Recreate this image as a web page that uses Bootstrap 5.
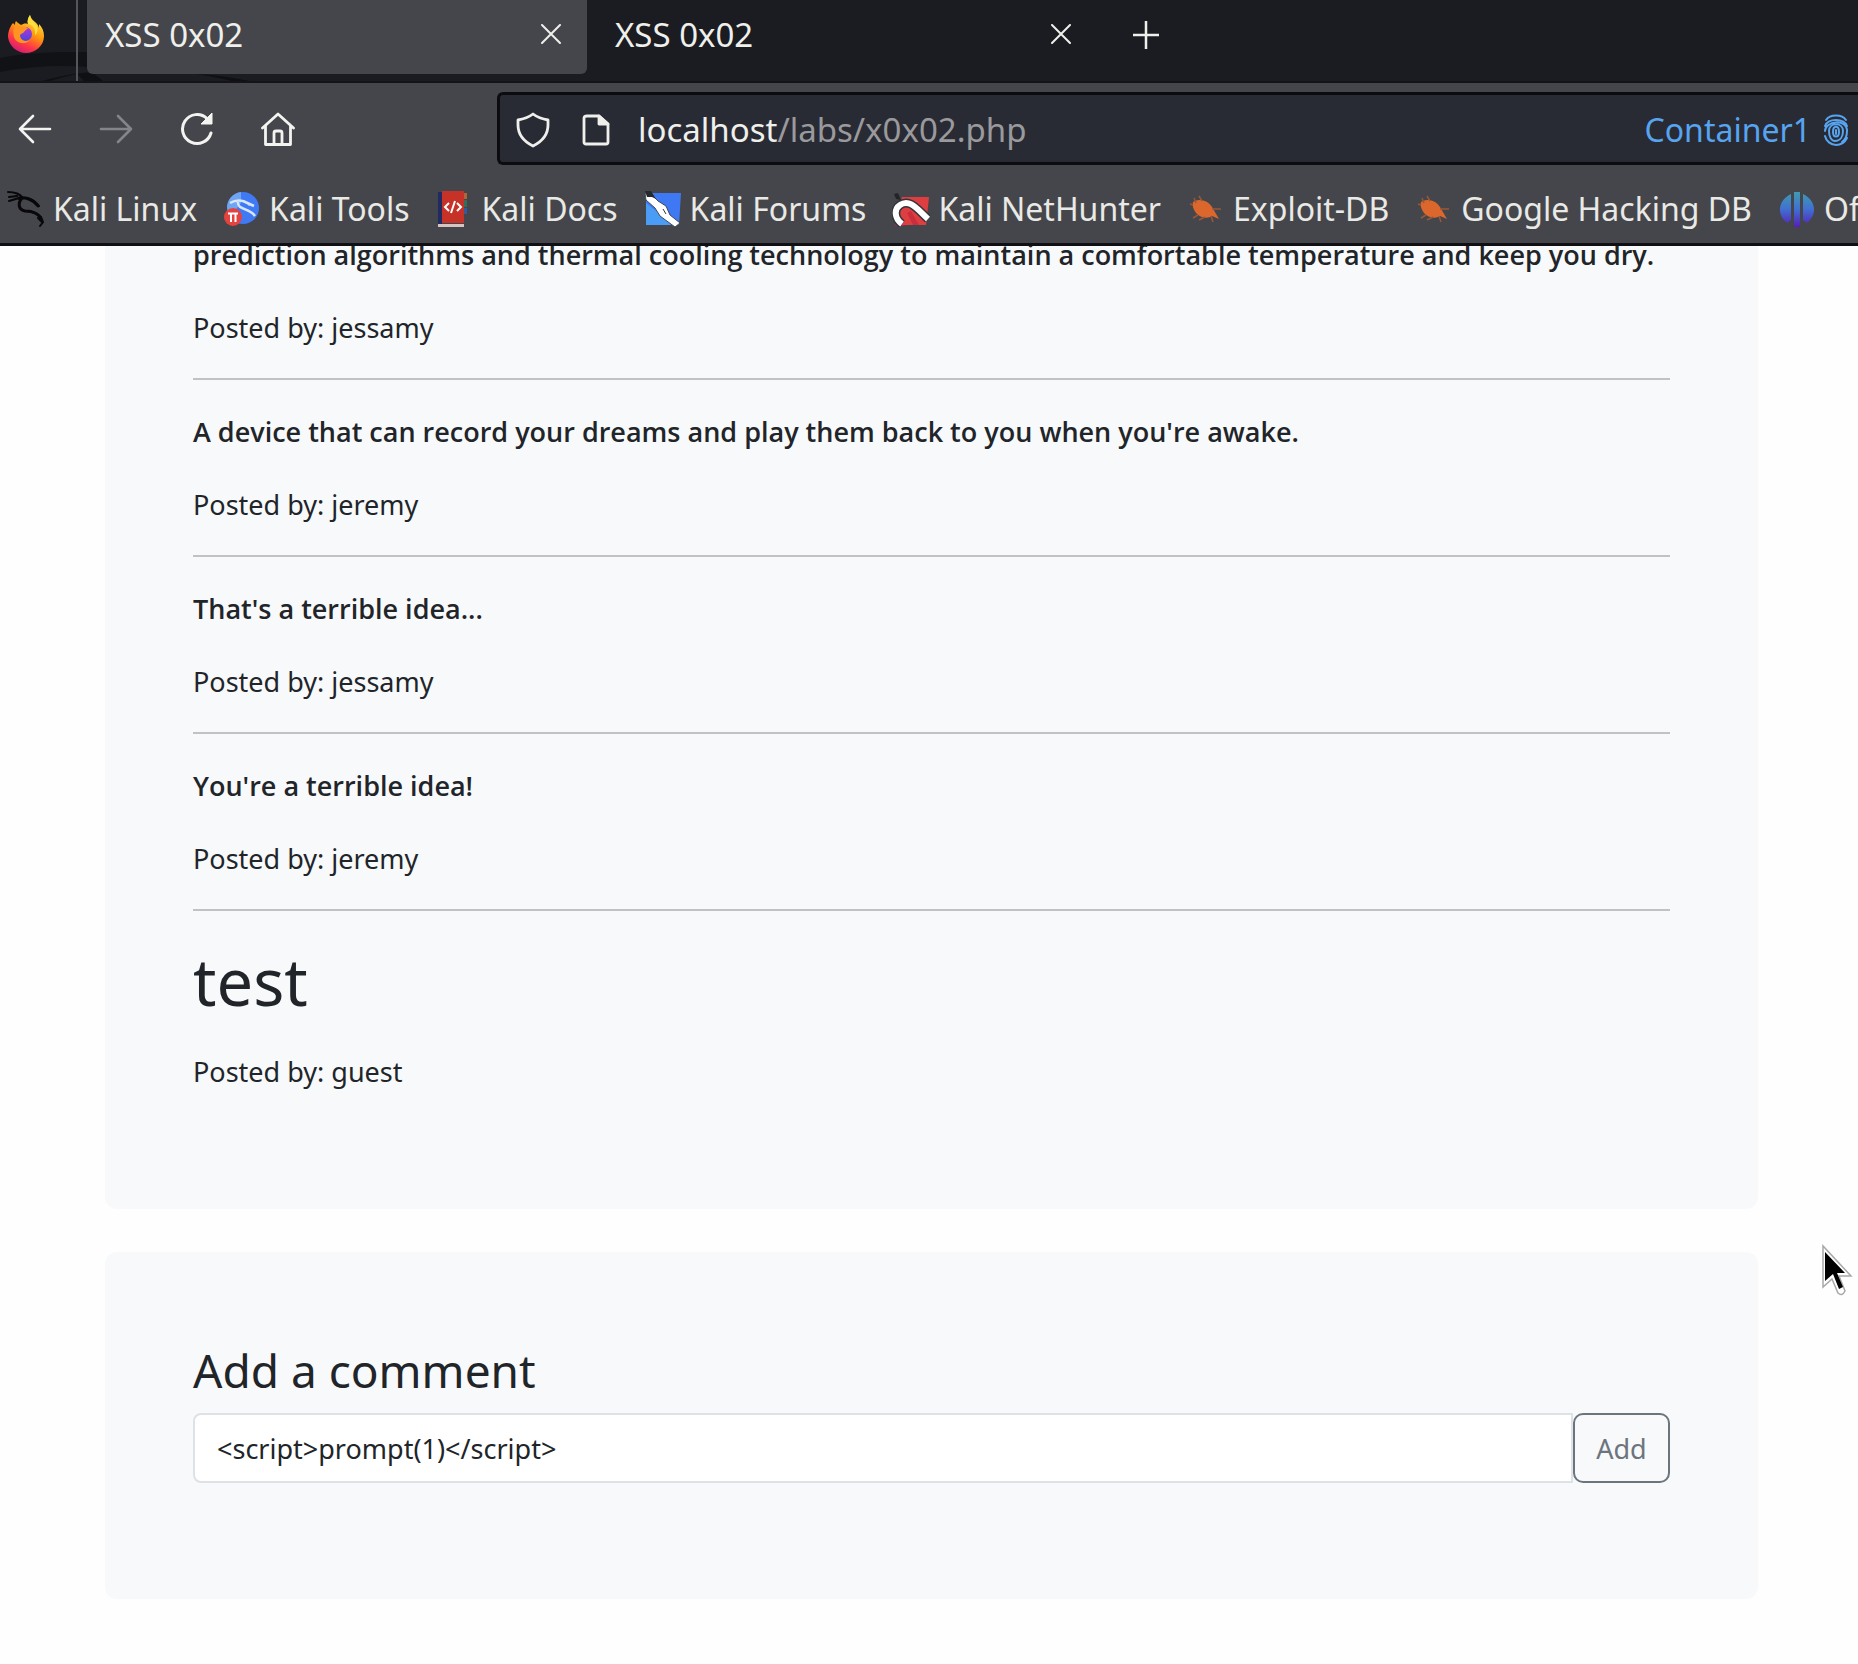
<!DOCTYPE html>
<html lang="en">
<head>
<meta charset="utf-8">
<meta name="viewport" content="width=device-width, initial-scale=1">
<title>XSS 0x02</title>
<link href="https://cdn.jsdelivr.net/npm/bootstrap@5.3.0/dist/css/bootstrap.min.css" rel="stylesheet">
<style>
  body { font-family: "Noto Sans", "Open Sans", sans-serif; font-size: 27px; line-height: 44px; color: #212529; background: #fefefe; overflow-x: hidden; }
  svg { display: block; flex: none; }
  button { line-height: 1; }

  /* Browser chrome */
  .chrome { background: #45464b; border-bottom: 3px solid #101014; color: #efefec; }
  .tab-strip { height: 83px; background: #1b1c21; border-bottom: 2px solid #131318; position: relative; padding-bottom: 7px; }
  .swirl { position: absolute; left: 0; bottom: 0; }
  .pinned { width: 78px; padding: 15px 0 0 8px; border-right: 2px solid #55565b; margin-bottom: -7px; margin-right: 9px; position: relative; }
  .page-tab { width: 500px; padding: 0 26px 6px 18px; font-size: 33px; border-radius: 0 0 6px 6px; position: relative; }
  .page-tab.current { background: #45464b; }
  .page-tab + .page-tab { width: 498px; padding-left: 28px; padding-right: 14px; }
  .plain { background: none; border: 0; padding: 0; color: inherit; }
  .nav-bar { height: 84px; padding: 9px 0 2px 0; }
  .nav-icons { width: 497px; gap: 47px; padding-left: 18px; }
  .url-box { background: #292b34; border: 3px solid #0c0c10; border-right: 0; border-radius: 6px 0 0 6px; font-size: 33px; padding: 2px 9px 0 16px; }
  .url-page { margin: 0 28px; }
  .url-path { color: #9a9a9d; }
  .container-name { color: #57a4f0; font-size: 32px; }
  .marks { height: 76px; padding: 7px 0 0 7px; gap: 26px; font-size: 32px; white-space: nowrap; overflow: hidden; }
  .marks a { color: #e9e9e6; text-decoration: none; gap: 8px; }

  /* Lab page */
  .lab { padding: 0 100px 65px 105px; }
  .panel { background: #f8f9fb; border-radius: 12px; padding: 88px; margin-bottom: 43px; }
  .panel-first { border-radius: 0 0 12px 12px; padding-top: 0; padding-bottom: 87px; margin-top: -13px; }
  .comment-text { margin: 0 0 29px; font-weight: 600; font-family: "Open Sans", "Noto Sans", sans-serif; white-space: nowrap; }
  .comment-h1 { font-size: 65px; line-height: 80px; margin: 0 0 29px; }
  .byline { margin: 0 0 28px; }
  .panel hr { margin: 0 0 30px; border-top: 2px solid #c1c2c4; opacity: 1; }
  .form-title { font-size: 46px; line-height: 60px; margin: 0 0 13px; font-weight: 400; }
  .comment-form { margin-bottom: 28px; height: 70px; }
  .comment-form .form-control { font-size: 27px; border: 2px solid #dee2e6; border-radius: 8px 0 0 8px; padding: 2px 22px 0; background: #fff; }
  .comment-form .btn { font-size: 27px; width: 97px; border-width: 2px; border-radius: 10px; padding: 2px 0 0; }
  .pointer { position: fixed; left: 1819px; top: 1243px; }
</style>
<script src="https://cdn.jsdelivr.net/npm/bootstrap@5.3.0/dist/js/bootstrap.bundle.min.js"></script>
</head>
<body>

<header class="chrome sticky-top">
  <div class="tab-strip d-flex">
    <svg class="swirl" width="260" height="40" viewBox="0 0 260 40" aria-hidden="true">
      <path d="M0 17C30 11 58 11 88 11V26C60 24 30 25 0 31Z" fill="#111216"/>
      <path d="M42 40C60 35 76 32 92 31L103 40H84L77 33C66 35 57 38 50 40ZM196 33C218 34 234 37 250 40H232C220 37 208 35 196 33Z" fill="#0f1013"/>
    </svg>
    <div class="pinned">
      <button class="plain" aria-label="Firefox">
        <svg width="36" height="38" viewBox="0 0 36 38">
          <defs>
            <linearGradient id="fx" x1=".8" y1="0" x2=".3" y2="1"><stop offset="0" stop-color="#fff44f"/><stop offset=".45" stop-color="#ff980e"/><stop offset=".75" stop-color="#ff3647"/><stop offset="1" stop-color="#d01c78"/></linearGradient>
            <linearGradient id="fg" x1="0" y1="0" x2="0" y2="1"><stop offset="0" stop-color="#b833e1"/><stop offset="1" stop-color="#4a46d8"/></linearGradient>
          </defs>
          <path d="M22 0c-2 3-3 6-2 9-3-1-5 0-7 1-2-1-4-3-5-4-1 1-1 3-1 4L5 8C1 13 0 18 0 22c1 9 9 16 18 16s18-7 18-17c0-5-2-9-5-12 0 2 0 3 0 4C30 7 23 6 22 0Z" fill="url(#fx)"/>
          <circle cx="17" cy="19" r="7" fill="url(#fg)"/>
          <path d="M7 10c3 0 5 1 6 2 3-1 6 0 7 2-2 0-3 2-4 3-1 2-4 1-4 4 1 5 6 6 10 4-4 5-14 4-16-3-1-4-1-8 1-12Z" fill="#ff9422"/>
          <path d="M20 9c5 1 8 5 7 11 3-2 3-6 2-9-2-3-6-5-7-11-2 3-3 6-2 9Z" fill="#ffdf3f"/>
        </svg>
      </button>
    </div>
    <div class="page-tab current d-flex align-items-center justify-content-between">
      <button class="plain">XSS 0x02</button>
      <button class="plain" aria-label="Close tab"><svg width="20" height="20" viewBox="0 0 20 20" stroke="#efefec" stroke-width="2" stroke-linecap="round"><path d="M1 1 19 19M19 1 1 19"/></svg></button>
    </div>
    <div class="page-tab d-flex align-items-center justify-content-between">
      <button class="plain">XSS 0x02</button>
      <button class="plain" aria-label="Close tab"><svg width="20" height="20" viewBox="0 0 20 20" stroke="#efefec" stroke-width="2" stroke-linecap="round"><path d="M1 1 19 19M19 1 1 19"/></svg></button>
    </div>
    <button class="plain ms-5 pb-1" aria-label="New tab"><svg width="26" height="28" viewBox="0 0 26 28" stroke="#efefec" stroke-width="2.5"><path d="M13 0V28M0 14H26"/></svg></button>
  </div>

  <div class="nav-bar d-flex">
    <div class="nav-icons d-flex align-items-center">
      <button class="plain" aria-label="Back"><svg width="34" height="30" viewBox="0 0 34 30" fill="none" stroke="#f3f3f0" stroke-width="2.6" stroke-linecap="round" stroke-linejoin="round"><path d="M32 15H2M15 2 2 15 15 28"/></svg></button>
      <button class="plain" aria-label="Forward"><svg width="34" height="30" viewBox="0 0 34 30" fill="none" stroke="#84858a" stroke-width="2.6" stroke-linecap="round" stroke-linejoin="round"><path d="M2 15H32M19 2 32 15 19 28"/></svg></button>
      <button class="plain" aria-label="Reload"><svg width="34" height="34" viewBox="0 0 34 34" fill="none"><path d="M31 21A14.5 14.5 0 1 1 27 6.500" stroke="#f3f3f0" stroke-width="3" stroke-linecap="round"/><path d="M32 1V12H21Z" fill="#f3f3f0" stroke="#f3f3f0" stroke-linejoin="round"/></svg></button>
      <button class="plain" aria-label="Home"><svg width="34" height="34" viewBox="0 0 34 34" fill="none" stroke="#f3f3f0" stroke-width="2.8" stroke-linejoin="round" stroke-linecap="round"><path d="M1.500 16 17 2 32.500 16M4.500 14V32.500H29.500V14M13 32V21Q13 19 15 19H19Q21 19 21 21V32"/></svg></button>
    </div>
    <div class="url-box d-flex align-items-center flex-grow-1">
      <svg width="34" height="36" viewBox="0 0 34 36" fill="none" stroke="#efefec" stroke-width="2.800" stroke-linejoin="round"><path d="M17 2C13 5 8 7 2 8V13C2 22 7 29 17 34 27 29 32 22 32 13V8C26 7 21 5 17 2Z"/></svg>
      <svg class="url-page ms-4 ps-2" width="36" height="32" viewBox="0 0 28 32" preserveAspectRatio="xMidYMid meet" fill="none" stroke="#efefec" stroke-width="2.800" stroke-linejoin="round"><path d="M5 2H17L26 10V28Q26 30 24 30H4Q2 30 2 28V4Q2 2 5 2Z"/><path d="M17 2V10H26Z" fill="#efefec"/></svg>
      <div class="flex-grow-1" role="textbox" aria-label="Address" contenteditable="true" spellcheck="false">localhost<span class="url-path">/labs/x0x02.php</span></div>
      <span class="container-name">Container1</span>
      <svg class="ms-2 ps-1" width="30" height="32" viewBox="0 0 26 32" fill="none" stroke="#57a4f0" stroke-width="2" stroke-linecap="round"><path d="M3 6C7 0 19 0 23 6M2 12C5 4 21 4 24 12M2 17C2 7 24 4 24 17 24 22 22 26 19 28M2 22C3 27 8 31 13 31 18 31 22 28 24 24M6 17C6 8 20 8 20 17 20 23 17 27 12 27 8 27 6 22 6 17ZM10 18C10 11 16 11 16 18 16 24 10 24 10 18M13 16V20"/></svg>
    </div>
  </div>

  <nav class="marks d-flex align-items-center" aria-label="Bookmarks">
    <a href="#" class="d-flex align-items-center">
      <svg width="38" height="36" viewBox="0 0 38 36" fill="none" stroke="#08080a" stroke-linecap="round"><path d="M1 1C8 1 13 3 16 7L12 8M2 6 10 5M2 10 12 7" stroke-width="2"/><path d="M12 7C18 6 26 8 31 15M15 7C10 13 12 19 18 20 26 20 33 23 34 29" stroke-width="3"/><path d="M20 7 27 10 32 15M26 21 34 26 36 31 33 35M31 27 35 31" stroke-width="2"/></svg>Kali Linux</a>
    <a href="#" class="d-flex align-items-center">
      <svg width="38" height="36" viewBox="0 0 38 36"><circle cx="20" cy="17" r="16" fill="#3f79f4"/><path d="M4 17A16 16 0 0 1 18 1V12L7 26Z" fill="#70a5f1"/><path d="M7 12C16 7 22 10 27 14M15 11C14 19 27 17 32 25M20 10 31 15" fill="none" stroke="#d6e6fc" stroke-width="2.500"/><circle cx="10" cy="26" r="9" fill="#e2433e"/><path d="M5 22.500H15M8 23V31M12.500 23V31" stroke="#fff" stroke-width="2" fill="none"/></svg>Kali Tools</a>
    <a href="#" class="d-flex align-items-center">
      <svg width="38" height="36" viewBox="0 0 38 36"><path d="M2 1H6V33H2Z" fill="#202b61"/><path d="M6 0H28V32H6Z" fill="#c73228"/><path d="M28 2H31V8H28Z" fill="#b66436"/><path d="M28 9H31V16H28Z" fill="#30705a"/><path d="M28 17H31V23H28Z" fill="#315aa0"/><path d="M2 33H28V36H2Z" fill="#d6c4c0"/><path d="M13 12 9 16 13 20M21 12 25 16 21 20M19 10 15 22" stroke="#fff" stroke-width="2" fill="none"/></svg>Kali Docs</a>
    <a href="#" class="d-flex align-items-center">
      <svg width="38" height="36" viewBox="0 0 38 36"><path d="M2 2H37L35 34H2Z" fill="#3e79f3"/><path d="M2 12 30 34H2Z" fill="#4b9cf5"/><path d="M1 2 8 4 14 10 22 15 26 24 36 32 31 36 16 25 11 17 2 9Z" fill="#fff" stroke="#41495d"/><path d="M1 0H7L12 8 8 6 3 6Z" fill="#25282c"/><path d="m19 18 3 5" stroke="#333"/></svg>Kali Forums</a>
    <a href="#" class="d-flex align-items-center">
      <svg width="38" height="36" viewBox="0 0 38 36"><path d="M10 6H37L34 34H3V25Z" fill="#de3e40"/><path d="M3 24C5 34 12 35 19 35H3Z" fill="#a2264e"/><path d="M10 33C2 27 2 18 8 14 18 7 26 19 36 28" fill="none" stroke="#34343a" stroke-width="9"/><path d="M10 33C2 27 2 18 8 14 18 7 26 19 36 28" fill="none" stroke="#fff" stroke-width="6"/><path d="M2 3 6 2 9 9 4 8Z" fill="#222428"/><path d="M15 22 19 20 27 34H21Z" fill="#c92e3d"/></svg>Kali NetHunter</a>
    <a href="#" class="d-flex align-items-center">
      <svg width="38" height="36" viewBox="0 0 38 36"><path d="M6 11C11 7 21 9 25 16L32 28 25 25C21 28 13 27 9 22 6 18 5 14 6 11Z" fill="#dc672d"/><path d="M9 12 7 7M15 10 12 5M6 14 3 13M25 18 34 18M11 24 6 27M18 26 12 29M24 25 26 31" stroke="#97583a" stroke-width="1.500" fill="none"/></svg>Exploit-DB</a>
    <a href="#" class="d-flex align-items-center">
      <svg width="38" height="36" viewBox="0 0 38 36"><path d="M6 11C11 7 21 9 25 16L32 28 25 25C21 28 13 27 9 22 6 18 5 14 6 11Z" fill="#dc672d"/><path d="M9 12 7 7M15 10 12 5M6 14 3 13M25 18 34 18M11 24 6 27M18 26 12 29M24 25 26 31" stroke="#97583a" stroke-width="1.500" fill="none"/></svg>Google Hacking DB</a>
    <a href="#" class="d-flex align-items-center">
      <svg width="38" height="36" viewBox="0 0 38 36"><defs><linearGradient id="os" gradientUnits="userSpaceOnUse" x1="0" y1="0" x2="0" y2="36"><stop offset="0" stop-color="#3f9fae"/><stop offset=".5" stop-color="#4070d0"/><stop offset="1" stop-color="#5520b8"/></linearGradient></defs><path d="M13 3V29L9 32C-1 24-1 10 13 3ZM16 1H22V36H16ZM25 3C39 10 39 24 29 32L25 29Z" fill="url(#os)"/></svg>Of</a>
  </nav>
</header>

<main class="lab">
  <section class="panel panel-first">
    <p class="comment-text">prediction algorithms and thermal cooling technology to maintain a comfortable temperature and keep you dry.</p>
    <p class="byline">Posted by: jessamy</p>
    <hr>
    <p class="comment-text">A device that can record your dreams and play them back to you when you're awake.</p>
    <p class="byline">Posted by: jeremy</p>
    <hr>
    <p class="comment-text">That's a terrible idea...</p>
    <p class="byline">Posted by: jessamy</p>
    <hr>
    <p class="comment-text">You're a terrible idea!</p>
    <p class="byline">Posted by: jeremy</p>
    <hr>
    <h1 class="comment-h1 fw-normal">test</h1>
    <p class="byline">Posted by: guest</p>
  </section>

  <section class="panel mb-0">
    <h3 class="form-title"><label for="comment">Add a comment</label></h3>
    <form class="comment-form d-flex">
      <input id="comment" class="form-control flex-grow-1" type="text" value="&lt;script&gt;prompt(1)&lt;/script&gt;">
      <button class="btn btn-outline-secondary flex-shrink-0" type="button">Add</button>
    </form>
  </section>
</main>

<svg class="pointer" width="36" height="54" viewBox="0 0 36 54" aria-hidden="true"><path d="M4 3V44L13 36 19 50Q23 54 26 48L20 33H32Z" fill="#fff" stroke="#a8a8a8" stroke-width="1.500"/><path d="M6 9V38L14 31 20 46 24 44 18 30H26Z" fill="#000"/></svg>
</body>
</html>
